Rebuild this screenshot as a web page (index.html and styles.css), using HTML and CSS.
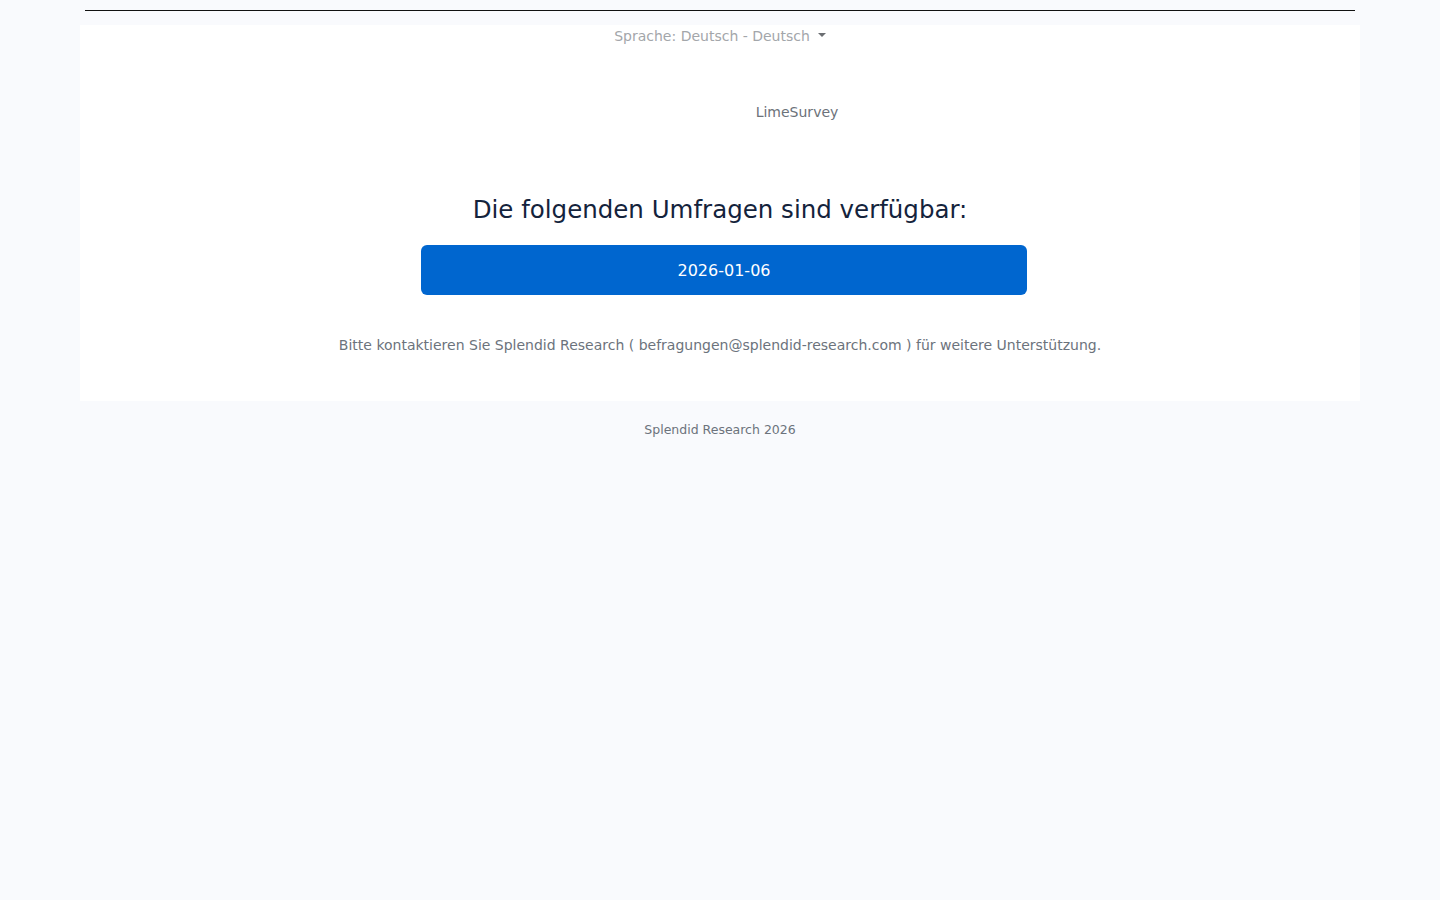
FILE: index.html
```html
<!DOCTYPE html>
<html lang="de">
<head>
<meta charset="utf-8">
<title>LimeSurvey</title>
<link rel="stylesheet" href="styles.css">
</head>
<body>
<div class="topbar"><hr class="topline"></div>
<main class="card">
  <div class="lang">
    <span class="lang-toggle">Sprache: Deutsch - Deutsch</span><span class="caret"></span>
  </div>
  <div class="logo"><span class="logo-text">LimeSurvey</span></div>
  <h1 class="title">Die folgenden Umfragen sind verfügbar:</h1>
  <div class="list">
    <a class="survey-btn" href="#">2026-01-06</a>
  </div>
  <p class="contact">Bitte kontaktieren Sie Splendid Research ( befragungen@splendid-research.com ) für weitere Unterstützung.</p>
</main>
<footer class="footer">Splendid Research 2026</footer>
</body>
</html>
```
FILE: styles.css
```css
html, body {
  margin: 0;
  padding: 0;
  background: #f9fafd;
  font-family: "DejaVu Sans", Verdana, sans-serif;
}
.topbar {
  padding: 10px 85px 0;
}
.topline {
  margin: 0;
  border: 0;
  border-top: 1px solid #111;
  height: 0;
}
.card {
  margin: 14px 80px 0;
  background: #fff;
  padding: 1px 0 46px;
  display: flex;
  flex-direction: column;
  align-items: center;
}
.lang {
  display: flex;
  align-items: center;
  gap: 8px;
  font-size: 14px;
  color: #a3a6aa;
  height: 20px;
}
.caret {
  width: 0;
  height: 0;
  border-left: 4px solid transparent;
  border-right: 4px solid transparent;
  border-top: 4px solid #6b6e72;
  margin-top: -2px;
}
.logo {
  margin-top: 58px;
  padding-left: 154px;
  font-size: 14px;
  color: #6c727a;
  height: 20px;
}
.title {
  margin: 71px 0 0;
  font-weight: 400;
  font-size: 24.5px;
  line-height: 30px;
  color: #14233c;
}
.list {
  margin-top: 20px;
  margin-left: 8px;
  width: 606px;
}
.survey-btn {
  display: flex;
  align-items: center;
  justify-content: center;
  height: 50px;
  background: #0066cf;
  color: #fff;
  border-radius: 6px;
  text-decoration: none;
  font-size: 16px;
}
.contact {
  margin: 40px 0 0;
  font-size: 14px;
  line-height: 20px;
  color: #6c737c;
}
.footer {
  text-align: center;
  font-size: 12.5px;
  color: #6c737c;
  margin-top: 21px;
}
```
